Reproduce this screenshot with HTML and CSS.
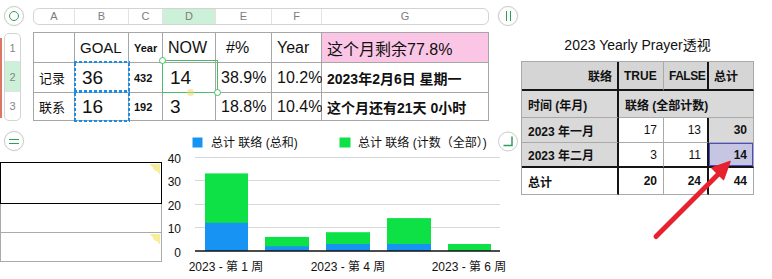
FILE: index.html
```html
<!DOCTYPE html>
<html>
	<head>
		<meta charset="utf-8">
		<title>2023 Yearly Prayer</title>
		<link rel="stylesheet" href="styles.css">
	</head>
	<body>
		<div class="canvas">
			<div class="leftSide">
				<div class="colBar">
					<span class="knob"><i class="ring"></i></span>
					<ul class="colHead">
						<li>A</li>
						<li>B</li>
						<li>C</li>
						<li class="on">D</li>
						<li>E</li>
						<li>F</li>
						<li>G</li>
					</ul>
					<span class="knob"><i class="pause"></i></span>
				</div>
				<div class="sheetBody">
					<i class="redEdge"></i>
					<ul class="rowHead">
						<li>1</li>
						<li class="on">2</li>
						<li>3</li>
					</ul>
					<div class="grid">
						<div class="cell"></div>
						<div class="cell s15">GOAL</div>
						<div class="cell tiny">Year</div>
						<div class="cell s16">NOW</div>
						<div class="cell s16 padMore">#%</div>
						<div class="cell s16">Year</div>
						<div class="cell s16 pink">这个月剩余77.8%</div>

						<div class="cell cn">记录</div>
						<div class="cell huge">36</div>
						<div class="cell tiny">432</div>
						<div class="cell huge">14</div>
						<div class="cell s16">38.9%</div>
						<div class="cell s16">10.2%</div>
						<div class="cell note">2023年2月6日 星期一</div>

						<div class="cell cn">联系</div>
						<div class="cell huge">16</div>
						<div class="cell tiny">192</div>
						<div class="cell huge">3</div>
						<div class="cell s16">18.8%</div>
						<div class="cell s16">10.4%</div>
						<div class="cell note">这个月还有21天 0小时</div>

						<span class="copyBox b2"></span>
						<span class="copyBox b3"></span>
						<span class="pick">
							<i class="dotTL"></i>
							<i class="dotBR"></i>
							<i class="dotMid"></i>
						</span>
					</div>
				</div>
				<div class="lower">
					<div class="boxCol">
						<span class="knob"><i class="equal"></i></span>
						<div class="boxes">
							<div class="box first"><i class="flag"></i></div>
							<div class="box"></div>
							<div class="box"><i class="flag"></i></div>
						</div>
					</div>
					<svg class="chart" width="359" height="148" viewBox="162 131 359 148">
						<rect x="192.5" y="137.5" width="10" height="10" fill="#1793f3" />
						<text class="legend" x="211" y="147">总计 联络 (总和)</text>
						<rect x="339.5" y="137.5" width="11" height="10" fill="#0de145" />
						<text class="legend" x="358" y="147">总计 联络 (计数（全部）)</text>

						<g class="gridLines">
							<line x1="195" x2="500" y1="157.5" y2="157.5" />
							<line x1="195" x2="500" y1="180.5" y2="180.5" />
							<line x1="195" x2="500" y1="204.5" y2="204.5" />
							<line x1="195" x2="500" y1="227.5" y2="227.5" />
						</g>

						<!-- 总和 / 计数 -->
						<rect x="205" y="173.4" width="43" height="77.6" fill="#0de145" />
						<rect x="205" y="222.8" width="43" height="28.2" fill="#1793f3" />
						<rect x="265" y="236.9" width="44" height="14.1" fill="#0de145" />
						<rect x="265" y="246.3" width="44" height="4.7" fill="#1793f3" />
						<rect x="326" y="232.2" width="44" height="18.8" fill="#0de145" />
						<rect x="326" y="244" width="44" height="7" fill="#1793f3" />
						<rect x="387" y="218.1" width="44" height="32.9" fill="#0de145" />
						<rect x="387" y="244" width="44" height="7" fill="#1793f3" />
						<rect x="448" y="244" width="43" height="7" fill="#0de145" />

						<line class="base" x1="195" x2="500" y1="251" y2="251" />

						<g class="yLabels">
							<text x="181" y="162.5">40</text>
							<text x="181" y="186">30</text>
							<text x="181" y="209.5">20</text>
							<text x="181" y="233">10</text>
							<text x="181" y="256.5">0</text>
						</g>
						<g class="xLabels">
							<text x="226" y="271">2023 - 第 1 周</text>
							<text x="348" y="271">2023 - 第 4 周</text>
							<text x="469" y="271">2023 - 第 6 周</text>
						</g>

						<circle class="knobRing" cx="508" cy="141.5" r="9.5" />
						<path class="knobMark" d="M503.5 145.5 H512 V136.5" />
					</svg>
				</div>
			</div>

			<div class="pivot">
				<h3>2023 Yearly Prayer透视</h3>
				<div class="pvGrid">
					<div class="pc hd right blackR blackB">联络</div>
					<div class="pc hd blackB">TRUE</div>
					<div class="pc hd tight blackR blackB">FALSE</div>
					<div class="pc hd blackB">总计</div>

					<div class="pc gray blackR">时间 (年月)</div>
					<div class="pc gray span3">联络 (全部计数)</div>

					<div class="pc gray blackR">2023 年一月</div>
					<div class="pc num">17</div>
					<div class="pc num blackR">13</div>
					<div class="pc num b gray">30</div>

					<div class="pc gray blackR blackB">2023 年二月</div>
					<div class="pc num blackB">3</div>
					<div class="pc num blackR blackB">11</div>
					<div class="pc num b sel blackB">14</div>

					<div class="pc blackR">总计</div>
					<div class="pc num b">20</div>
					<div class="pc num b blackR">24</div>
					<div class="pc num b">44</div>
				</div>
			</div>

			<svg class="arrow" width="772" height="279">
				<line x1="656" y1="236.5" x2="719" y2="173.5" />
				<polygon points="730,161.5 712,168 723.5,179.5" />
			</svg>
		</div>
	</body>
</html>
```

FILE: styles.css
```css
* {
	margin: 0;
	padding: 0;
	box-sizing: border-box;
}

ul,
li {
	list-style: none;
}

i {
	display: block;
}

html,
body {
	height: 100%;
	overflow: hidden;
}

body {
	font-family: "Liberation Sans", "Noto Sans CJK SC", sans-serif;
	color: #111;
	background-color: #fff;
}

.canvas {
	position: relative;
	display: flex;
	width: 772px;
	height: 279px;
}

.leftSide {
	width: 521px;
}

/* knobs */
.knob {
	display: flex;
	align-items: center;
	justify-content: center;
	flex-shrink: 0;
	width: 20px;
	height: 20px;
	border: 1px solid #cbcbcb;
	border-radius: 50%;
	background-color: #fff;
	box-shadow: 0 0 2px rgba(0, 0, 0, .08);
}

.knob .ring {
	width: 10px;
	height: 10px;
	border: 1.5px solid #2e9e5b;
	border-radius: 50%;
}

.knob .pause {
	width: 5px;
	height: 10px;
	border-left: 1.5px solid #2e9e5b;
	border-right: 1.5px solid #2e9e5b;
}

.knob .equal {
	width: 10px;
	height: 5px;
	border-top: 1.5px solid #2e9e5b;
	border-bottom: 1.5px solid #2e9e5b;
}

/* column header */
.colBar {
	display: flex;
	align-items: center;
	height: 20px;
	margin-top: 6px;
}

.colBar .knob:first-child {
	margin-left: 4px;
}

.colHead {
	display: grid;
	grid-template-columns: 41px 54px 34px 53px 56px 50px 1fr;
	width: 456px;
	height: 17px;
	margin: 0 9px;
	border: 1px solid #d3d3d3;
	border-radius: 6px;
	overflow: hidden;
}

.colHead li {
	border-right: 1px solid #e3e3e3;
	font-size: 11px;
	line-height: 15px;
	text-align: center;
	color: #7c7c7c;
}

.colHead li:last-child {
	border-right: 0;
}

.colHead li.on {
	background-color: #cdf1d8;
}

/* table */
.sheetBody {
	display: flex;
	margin-top: 6px;
}

.redEdge {
	width: 2px;
	height: 80px;
	margin-top: 6px;
	background-color: #dc7766;
}

.rowHead {
	width: 17px;
	height: 88px;
	margin: 1px 0 0 2px;
	border: 1px solid #d3d3d3;
	border-radius: 5px;
	overflow: hidden;
}

.rowHead li {
	display: flex;
	align-items: center;
	justify-content: center;
	height: 28px;
	font-size: 11px;
	color: #858585;
}

.rowHead li:nth-child(1) {
	border-bottom: 1px solid #e3e3e3;
}

.rowHead li.on {
	height: 30px;
	border-bottom: 1px solid #e3e3e3;
	background-color: #cdf1d8;
}

.grid {
	position: relative;
	display: grid;
	grid-template-columns: 41px 54px 34px 53px 56px 50px 167px;
	grid-template-rows: 30px 30px 28px;
	width: 456px;
	margin-left: 12px;
	border-top: 1px solid #a6a6a6;
	border-left: 1px solid #a6a6a6;
}

.grid .cell {
	display: flex;
	align-items: center;
	padding: 0 5px;
	border-right: 1px solid #a6a6a6;
	border-bottom: 1px solid #a6a6a6;
	background-color: #fff;
	white-space: nowrap;
}

.grid .s15 {
	font-size: 15px;
}

.grid .s16 {
	font-size: 16px;
}

.grid .padMore {
	padding-left: 10px;
}

.grid .tiny {
	font-size: 11px;
	font-weight: bold;
}

.grid .huge {
	padding-left: 7px;
	font-size: 19px;
}

.grid .cn {
	font-size: 13px;
}

.grid .note {
	font-size: 14px;
	font-weight: bold;
}

.grid .pink {
	background-color: #fbc6e6;
}

/* 复制框: square dots */
.copyBox {
	position: absolute;
	left: 40px;
	width: 56px;
	height: 31px;
	background-image:
		linear-gradient(90deg, #1a8ee6 60%, transparent 60%),
		linear-gradient(90deg, #1a8ee6 60%, transparent 60%),
		linear-gradient(0deg, #1a8ee6 60%, transparent 60%),
		linear-gradient(0deg, #1a8ee6 60%, transparent 60%);
	background-size: 5px 2px, 5px 2px, 2px 5px, 2px 5px;
	background-position: 0 0, 0 100%, 0 0, 100% 0;
	background-repeat: repeat-x, repeat-x, repeat-y, repeat-y;
}

.copyBox.b2 {
	top: 28px;
}

.copyBox.b3 {
	top: 58px;
}

.pick {
	position: absolute;
	left: 128px;
	top: 27px;
	width: 56px;
	height: 33px;
	border: 1.5px solid #45c067;
}

.pick i {
	position: absolute;
	width: 7px;
	height: 7px;
	border-radius: 50%;
}

.pick .dotTL {
	left: -4px;
	top: -4px;
	border: 1.5px solid #45c067;
	background-color: #fff;
}

.pick .dotBR {
	right: -4px;
	bottom: -4px;
	border: 1.5px solid #45c067;
	background-color: #fff;
}

.pick .dotMid {
	left: 24px;
	bottom: -4px;
	background-color: rgba(236, 214, 110, .55);
}

/* lower part */
.lower {
	display: flex;
	margin-top: 10px;
}

.boxCol {
	width: 162px;
}

.boxCol .knob {
	margin-left: 4px;
}

.boxes {
	margin-top: 11px;
}

.box {
	position: relative;
	height: 29px;
	border: 1px solid #aaa;
	border-top: 0;
}

.box.first {
	height: 42px;
	border: 1.5px solid #000;
}

.box .flag {
	position: absolute;
	right: 1px;
	top: 1px;
	width: 11px;
	height: 11px;
	background: linear-gradient(to bottom left, #f6ee9a 50%, transparent 50%);
}

.chart {
	display: block;
}

.chart text {
	font-family: "Liberation Sans", "Noto Sans CJK SC", sans-serif;
	font-size: 12px;
	fill: #111;
}

.chart .gridLines line {
	stroke: #d7d7d7;
	stroke-width: 1;
}

.chart .base {
	stroke: #111;
	stroke-width: 1.3;
}

.chart .yLabels text {
	text-anchor: end;
}

.chart .xLabels text {
	text-anchor: middle;
}

.chart .knobRing {
	fill: #fff;
	stroke: #cbcbcb;
	stroke-width: 1;
}

.chart .knobMark {
	fill: none;
	stroke: #2e9e5b;
	stroke-width: 1.5;
}

/* pivot */
.pivot {
	width: 233px;
	padding-top: 36px;
}

.pivot h3 {
	height: 18px;
	font-size: 14px;
	font-weight: normal;
	line-height: 18px;
	text-align: center;
	white-space: nowrap;
}

.pvGrid {
	display: grid;
	grid-template-columns: 97px 45px 45px 45px;
	grid-template-rows: 29px 27px 25px 25px 27px;
	margin-top: 7px;
	border-top: 1px solid #a9a9a9;
	border-left: 1px solid #a9a9a9;
}

.pvGrid .pc {
	display: flex;
	align-items: center;
	padding: 0 6px;
	border-right: 1px solid #a9a9a9;
	border-bottom: 1px solid #a9a9a9;
	font-size: 12px;
	font-weight: bold;
	white-space: nowrap;
}

.pvGrid .hd {
	padding: 0 5px;
	background-color: #d5d5d5;
}

.pvGrid .tight {
	letter-spacing: -.5px;
}

.pvGrid .gray {
	background-color: #d9d9d9;
}

.pvGrid .right,
.pvGrid .num {
	justify-content: flex-end;
}

.pvGrid .num {
	font-weight: normal;
}

.pvGrid .b {
	font-weight: bold;
}

.pvGrid .span3 {
	grid-column: span 3;
}

.pvGrid .blackR {
	border-right: 2px solid #151515;
}

.pvGrid .blackB {
	border-bottom: 2px solid #151515;
}

.pvGrid .sel {
	background-color: #c6c6e3;
	box-shadow: inset 0 0 0 1px #4b4bcf;
}

.arrow {
	position: absolute;
	left: 0;
	top: 0;
	pointer-events: none;
}

.arrow line {
	stroke: #e5222e;
	stroke-width: 5;
	stroke-linecap: round;
}

.arrow polygon {
	fill: #e5222e;
	stroke: #e5222e;
	stroke-width: 1.5;
	stroke-linejoin: round;
}
```
